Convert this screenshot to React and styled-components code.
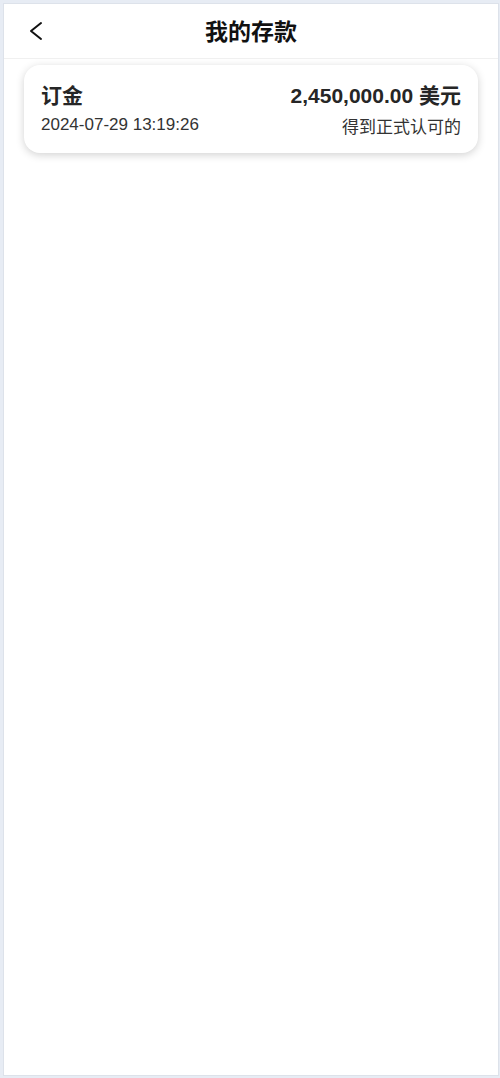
import React from "react";
import styled, { createGlobalStyle } from "styled-components";

const Global = createGlobalStyle`
  html, body { margin: 0; padding: 0; background: #e7ecf4; }
  body { font-family: "Liberation Sans", Arial, "Noto Sans CJK SC", sans-serif; }
`;

const Outer = styled.div`
  padding: 3px 1px 2px 3px;
  height: 1078px;
  box-sizing: border-box;
`;

const Frame = styled.div`
  height: 100%;
  box-sizing: border-box;
  background: #fff;
  border: 1px solid #dde2ea;
  display: flex;
  flex-direction: column;
`;

const Header = styled.header`
  height: 54px;
  flex: none;
  display: flex;
  align-items: center;
  justify-content: center;
  position: relative;
  border-bottom: 1px solid #f0f0f0;
`;

const Back = styled.button`
  position: absolute;
  left: 24px;
  top: 16px;
  background: none;
  border: none;
  padding: 0;
  width: 16px;
  height: 22px;
  display: block;
  cursor: pointer;
  svg { display: block; }
`;

const Title = styled.h1`
  margin: 0 0 2px 0;
  font-size: 23px;
  line-height: 1;
  font-weight: 700;
  color: #111;
  font-family: "Noto Sans CJK SC", sans-serif;
`;

const List = styled.div`
  padding: 6px 20px 0 20px;
  display: flex;
  flex-direction: column;
  gap: 12px;
`;

const Card = styled.div`
  background: #fff;
  border-radius: 16px;
  box-shadow: 0 2px 8px rgba(0, 0, 0, 0.18);
  padding: 17px 17px 15px 17px;
  display: flex;
  justify-content: space-between;
  align-items: flex-start;
`;

const Col = styled.div`
  display: flex;
  flex-direction: column;
  align-items: ${(p) => (p.$right ? "flex-end" : "flex-start")};
  gap: ${(p) => (p.$right ? "8px" : "5px")};
`;

const Strong = styled.div`
  font-size: 21px;
  font-weight: 700;
  color: #262626;
  line-height: 28px;
  white-space: nowrap;
`;

const Sub = styled.div`
  font-size: 17px;
  color: #333;
  line-height: 20px;
  white-space: nowrap;
`;

const deposits = [
  {
    type: "订金",
    time: "2024-07-29 13:19:26",
    amount: "2,450,000.00 美元",
    status: "得到正式认可的",
  },
];

export default function App() {
  return (
    <>
      <Global />
      <Outer>
        <Frame>
          <Header>
            <Back aria-label="back">
              <svg width="16" height="22" viewBox="0 0 16 22" fill="none">
                <path d="M13 3 L3 11 L13 19" stroke="#111" strokeWidth="2" strokeLinecap="round" strokeLinejoin="round" />
              </svg>
            </Back>
            <Title>我的存款</Title>
          </Header>
          <List>
            {deposits.map((d, i) => (
              <Card key={i}>
                <Col>
                  <Strong>{d.type}</Strong>
                  <Sub>{d.time}</Sub>
                </Col>
                <Col $right>
                  <Strong>{d.amount}</Strong>
                  <Sub>{d.status}</Sub>
                </Col>
              </Card>
            ))}
          </List>
        </Frame>
      </Outer>
    </>
  );
}
